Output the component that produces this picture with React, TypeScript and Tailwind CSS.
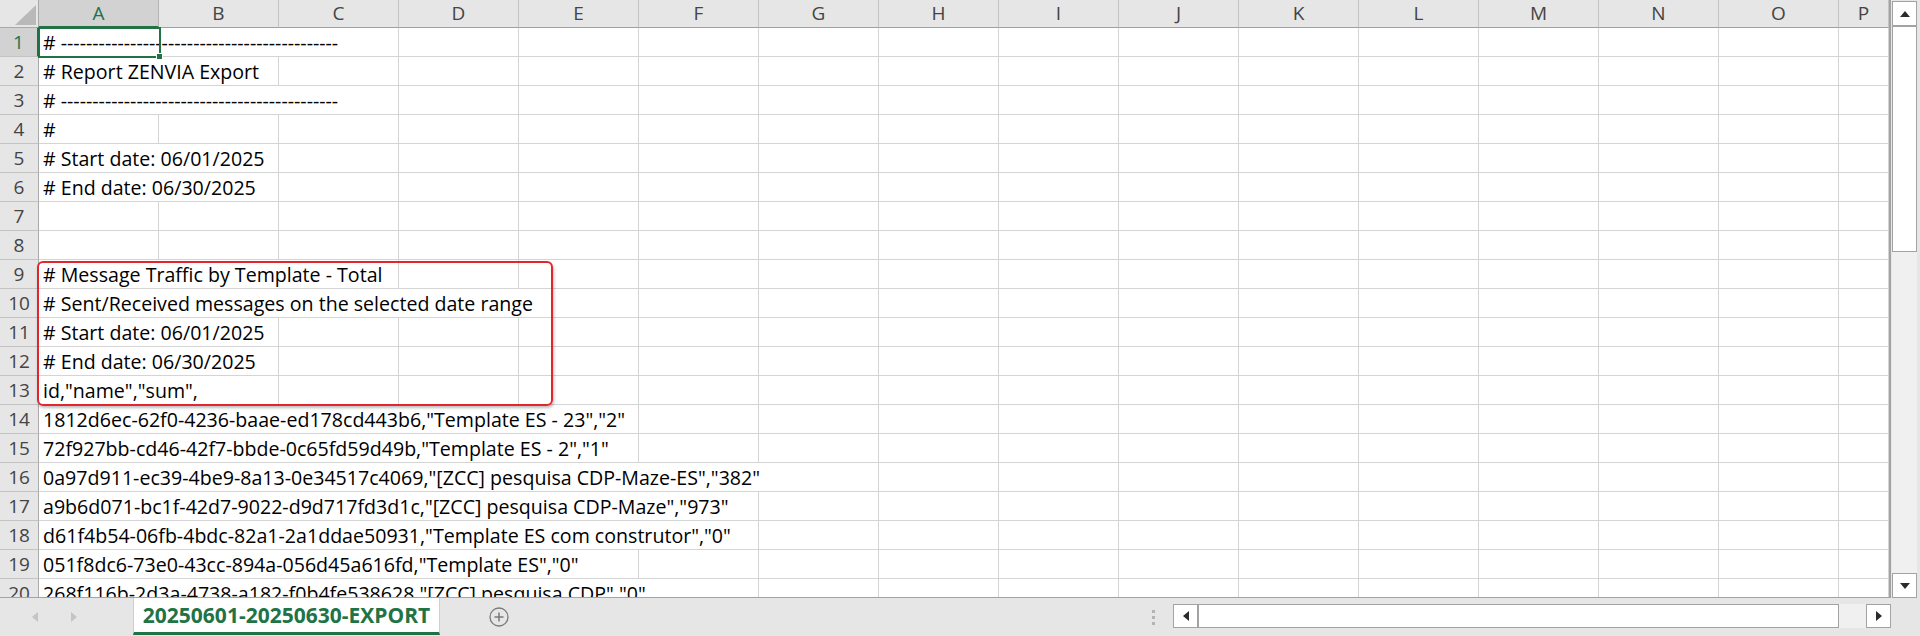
import React from 'react';

const GREEN = '#217346';

const COLUMNS = ['A', 'B', 'C', 'D', 'E', 'F', 'G', 'H', 'I', 'J', 'K', 'L', 'M', 'N', 'O', 'P'];

type Row = { text?: string; span?: number };

const RULE = '# ' + '-'.repeat(44);

// each row keeps its text in column A; span = how many cells the text runs over
const ROWS: Row[] = [
  { text: RULE, span: 3 },
  { text: '# Report ZENVIA Export', span: 2 },
  { text: RULE, span: 3 },
  { text: '#', span: 1 },
  { text: '# Start date: 06/01/2025', span: 2 },
  { text: '# End date: 06/30/2025', span: 2 },
  {},
  {},
  { text: '# Message Traffic by Template - Total', span: 3 },
  { text: '# Sent/Received messages on the selected date range', span: 5 },
  { text: '# Start date: 06/01/2025', span: 2 },
  { text: '# End date: 06/30/2025', span: 2 },
  { text: 'id,"name","sum",', span: 2 },
  { text: '1812d6ec-62f0-4236-baae-ed178cd443b6,"Template ES - 23","2"', span: 5 },
  { text: '72f927bb-cd46-42f7-bbde-0c65fd59d49b,"Template ES - 2","1"', span: 5 },
  { text: '0a97d911-ec39-4be9-8a13-0e34517c4069,"[ZCC] pesquisa CDP-Maze-ES","382"', span: 7 },
  { text: 'a9b6d071-bc1f-42d7-9022-d9d717fd3d1c,"[ZCC] pesquisa CDP-Maze","973"', span: 6 },
  { text: 'd61f4b54-06fb-4bdc-82a1-2a1ddae50931,"Template ES com construtor","0"', span: 6 },
  { text: '051f8dc6-73e0-43cc-894a-056d45a616fd,"Template ES","0"', span: 5 },
  { text: '268f116b-2d3a-4738-a182-f0b4fe538628,"[ZCC] pesquisa CDP","0"', span: 6 },
];

// width of the merged-looking cell a text runs over (120px per column)
const SPAN_W: Record<number, string> = {
  1: 'w-[120px]',
  2: 'w-[240px]',
  3: 'w-[360px]',
  5: 'w-[600px]',
  6: 'w-[720px]',
  7: 'w-[840px]',
};

const LINE = 'border-r border-b border-[#d4d4d4]';

function Arrow({ dir, color = '#2b2b2b' }: { dir: 'up' | 'down' | 'left' | 'right'; color?: string }) {
  const pts = {
    up: '0,6 5,0 10,6',
    down: '0,0 10,0 5,6',
    left: '6,0 6,10 0,5',
    right: '0,0 6,5 0,10',
  }[dir];
  const vertical = dir === 'up' || dir === 'down';
  return (
    <svg width={vertical ? 10 : 6} height={vertical ? 6 : 10} viewBox={vertical ? '0 0 10 6' : '0 0 6 10'}>
      <polygon points={pts} fill={color} />
    </svg>
  );
}

function ScrollButton({ dir, className = '' }: { dir: 'up' | 'down' | 'left' | 'right'; className?: string }) {
  return (
    <div className={`flex items-center justify-center bg-white border border-[#a3a3a3] ${className}`}>
      <Arrow dir={dir} />
    </div>
  );
}

function HeaderRow() {
  return (
    <div className="flex h-[28px] bg-[#e6e6e6]">
      <div className="relative w-[39px] shrink-0 border-r border-b border-[#a9a9a9]">
        <svg className="absolute left-0 top-0" width="39" height="28">
          <polygon points="36,5 36,25 15,25" fill="#b9b9b9" />
        </svg>
      </div>
      {COLUMNS.map((c, i) => {
        const w = c === 'P' ? 'w-[50px]' : 'w-[120px]';
        return i === 0 ? (
          <div
            key={c}
            className={`${w} shrink-0 flex items-center justify-center bg-[#d2d2d2] border-r border-[#b5b5b5] border-b-2 border-b-[#217346] text-[19px] text-[#217346]`}
          >
            {c}
          </div>
        ) : (
          <div
            key={c}
            className={`${w} shrink-0 flex items-center justify-center border-r border-[#c3c3c3] border-b border-b-[#a0a0a0] text-[19px] text-[#444]`}
          >
            {c}
          </div>
        );
      })}
    </div>
  );
}

function SheetRow({ row, index }: { row: Row; index: number }) {
  const span = row.text ? row.span ?? 1 : 1;
  const active = index === 0;
  const rest = COLUMNS.slice(span);
  return (
    <div className="flex h-[29px]">
      <div
        className={
          active
            ? 'w-[39px] shrink-0 flex items-center justify-center bg-[#d2d2d2] border-r-2 border-r-[#217346] border-b border-b-[#c3c3c3] text-[19px] text-[#217346]'
            : 'w-[39px] shrink-0 flex items-center justify-center bg-[#e6e6e6] border-r border-[#a9a9a9] border-b border-b-[#c3c3c3] text-[19px] text-[#444]'
        }
      >
        {index + 1}
      </div>
      <div className={`relative ${SPAN_W[span]} shrink-0 ${LINE} pl-[4px] whitespace-nowrap text-[19.6px] leading-[29px] text-black`}>
        {row.text}
        {active && (
          <div className="absolute -left-[1px] -top-[1px] w-[123px] h-[31px] border-2 border-[#217346] z-10">
            <div className="absolute -right-[4px] -bottom-[4px] w-[7px] h-[7px] bg-[#217346] border border-white" />
          </div>
        )}
      </div>
      {rest.map((c) => (
        <div key={c} className={`${c === 'P' ? 'w-[50px]' : 'w-[120px]'} shrink-0 ${LINE}`} />
      ))}
    </div>
  );
}

export default function App() {
  return (
    <div
      className="w-[1920px] h-[636px] overflow-hidden bg-[#e6e6e6] flex flex-col select-none"
      style={{ fontFamily: '"Open Sans", "Noto Sans", sans-serif' }}
    >
      {/* sheet + vertical scrollbar */}
      <div className="flex h-[598px]">
        <div className="w-[1891px] h-[598px] overflow-hidden bg-white border-r-2 border-b border-[#a3a3a3]">
          <HeaderRow />
          <div className="relative">
            {ROWS.map((r, i) => (
              <SheetRow key={i} row={r} index={i} />
            ))}
            {/* highlight around the template block */}
            <div className="absolute left-[37px] top-[233px] w-[516px] h-[145px] rounded-[6px] border-2 border-[#e3262d] shadow-[1px_2px_3px_rgba(0,0,0,0.25)] z-20" />
          </div>
        </div>
        <div className="w-[29px] flex flex-col pt-[1px] pl-[1px] pr-[3px]">
          <ScrollButton dir="up" className="h-[25px]" />
          <div className="h-[226px] bg-white border border-[#a3a3a3]" />
          <div className="flex-1 bg-[#f0f0f0]" />
          <ScrollButton dir="down" className="h-[25px]" />
        </div>
      </div>

      {/* sheet tabs + horizontal scrollbar */}
      <div className="flex h-[38px] items-start">
        <div className="w-[133px] h-full flex items-center pl-[32px] gap-[33px]">
          <Arrow dir="left" color="#c4c4c4" />
          <Arrow dir="right" color="#c4c4c4" />
        </div>
        <div className="w-[307px] h-[37px] bg-white border-x border-[#d0d0d0] border-b-[3px] border-b-[#217346] flex items-center justify-center">
          <span className="text-[21px] font-bold leading-none" style={{ color: GREEN }}>
            20250601-20250630-EXPORT
          </span>
        </div>
        <div className="h-full flex items-center ml-[49px]">
          <svg width="20" height="20" viewBox="0 0 20 20">
            <circle cx="10" cy="10" r="9" fill="none" stroke="#7a7a7a" strokeWidth="1.3" />
            <path d="M10 5.5v9M5.5 10h9" stroke="#7a7a7a" strokeWidth="1.5" />
          </svg>
        </div>
        <div className="flex-1" />
        <div className="h-full flex flex-col justify-center gap-[3px] mr-[18px]">
          <div className="w-[3px] h-[3px] bg-[#b4b4b4]" />
          <div className="w-[3px] h-[3px] bg-[#b4b4b4]" />
          <div className="w-[3px] h-[3px] bg-[#b4b4b4]" />
        </div>
        <div className="flex h-[24px] mt-[6px] mr-[29px]">
          <ScrollButton dir="left" className="w-[25px]" />
          <div className="w-[641px] bg-white border border-[#a3a3a3]" />
          <div className="w-[27px] bg-[#f0f0f0]" />
          <ScrollButton dir="right" className="w-[25px]" />
        </div>
      </div>
    </div>
  );
}
